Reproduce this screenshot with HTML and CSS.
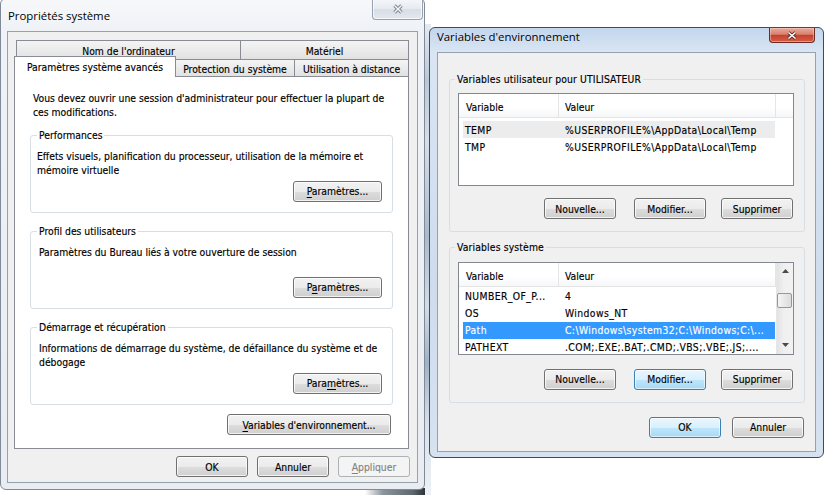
FILE: index.html
```html
<!DOCTYPE html>
<html lang="fr">
<head>
<meta charset="utf-8">
<title>Propriétés système</title>
<link rel="stylesheet" href="styles.css">
</head>
<body>
<div class="desktop">
  <div class="backdrop"></div>
  <div class="backdrop-shadow"></div>

  <section class="win win-sys">
    <header class="titlebar">
      <span class="title">Propriétés système</span>
      <span class="close close-inactive">
        <svg width="12" height="10" viewBox="0 0 12 10"><path d="M2.5 1.5 L9.5 8.5 M9.5 1.5 L2.5 8.5" stroke="#7d8797" stroke-width="3.4" fill="none"/><path d="M2.5 1.5 L9.5 8.5 M9.5 1.5 L2.5 8.5" stroke="#f7f8fa" stroke-width="1.4" fill="none"/></svg>
      </span>
    </header>
    <div class="client">
      <div class="tabctl">
        <div class="tabrow tabrow-back">
          <div class="tab tab-nom">Nom de l'ordinateur</div>
          <div class="tab tab-mat">Matériel</div>
        </div>
        <div class="tabrow tabrow-front">
          <div class="tab tab-sel">Paramètres système avancés</div>
          <div class="tab tab-prot">Protection du système</div>
          <div class="tab tab-util">Utilisation à distance</div>
        </div>
        <div class="panel">
          <p class="intro">Vous devez ouvrir une session d'administrateur pour effectuer la plupart de<br>ces modifications.</p>

          <fieldset class="group group-perf">
            <legend>Performances</legend>
            <div class="group-body">
              <p>Effets visuels, planification du processeur, utilisation de la mémoire et<br>mémoire virtuelle</p>
              <button class="btn btn-param"><u>P</u>aramètres...</button>
            </div>
          </fieldset>

          <fieldset class="group">
            <legend>Profil des utilisateurs</legend>
            <div class="group-body">
              <p>Paramètres du Bureau liés à votre ouverture de session</p>
              <button class="btn btn-param">P<u>a</u>ramètres...</button>
            </div>
          </fieldset>

          <fieldset class="group">
            <legend>Démarrage et récupération</legend>
            <div class="group-body">
              <p>Informations de démarrage du système, de défaillance du système et de<br>débogage</p>
              <button class="btn btn-param">Para<u>m</u>ètres...</button>
            </div>
          </fieldset>

          <button class="btn btn-env"><u>V</u>ariables d'environnement...</button>
        </div>
      </div>
      <div class="dlg-buttons">
        <button class="btn">OK</button>
        <button class="btn">Annuler</button>
        <button class="btn btn-disabled"><u>A</u>ppliquer</button>
      </div>
    </div>
  </section>

  <section class="win win-env">
    <header class="titlebar">
      <span class="title">Variables d'environnement</span>
      <span class="close close-active">
        <svg width="12" height="9" viewBox="0 0 12 9"><path d="M2.5 1.5 L9.5 7.5 M9.5 1.5 L2.5 7.5" stroke="#5b2a22" stroke-width="3.2" fill="none"/><path d="M2.5 1.5 L9.5 7.5 M9.5 1.5 L2.5 7.5" stroke="#ffffff" stroke-width="1.6" fill="none"/></svg>
      </span>
    </header>
    <div class="client env-client">
      <fieldset class="vgroup">
        <legend>Variables utilisateur pour UTILISATEUR</legend>
        <div class="vgroup-body">
          <div class="listview">
            <div class="lv-main">
              <div class="lv-head">
                <div class="hc">Variable</div>
                <div class="hc">Valeur</div>
                <div class="hc hc-fill"></div>
              </div>
              <div class="lv-body lv-body-user">
                <div class="lv-row sel-inactive"><span>TEMP</span><span>%USERPROFILE%\AppData\Local\Temp</span></div>
                <div class="lv-row"><span>TMP</span><span>%USERPROFILE%\AppData\Local\Temp</span></div>
              </div>
            </div>
          </div>
          <div class="vbtns vbtns-user">
            <button class="btn btn-new">Nouvelle...</button>
            <button class="btn btn-mod">Modifier...</button>
            <button class="btn btn-del">Supprimer</button>
          </div>
        </div>
      </fieldset>

      <fieldset class="vgroup vgroup-sys">
        <legend>Variables système</legend>
        <div class="vgroup-body">
          <div class="listview">
            <div class="lv-main">
              <div class="lv-head">
                <div class="hc">Variable</div>
                <div class="hc">Valeur</div>
              </div>
              <div class="lv-body lv-body-sys">
                <div class="lv-row"><span>NUMBER_OF_P...</span><span>4</span></div>
                <div class="lv-row"><span>OS</span><span>Windows_NT</span></div>
                <div class="lv-row sel"><span>Path</span><span>C:\Windows\system32;C:\Windows;C:\...</span></div>
                <div class="lv-row"><span>PATHEXT</span><span>.COM;.EXE;.BAT;.CMD;.VBS;.VBE;.JS;....</span></div>
              </div>
            </div>
            <div class="scrollbar">
              <div class="sb-arrow"><svg width="7" height="4" viewBox="0 0 7 4"><path d="M0 4 L3.5 0 L7 4 Z" fill="#4a4a4a"/></svg></div>
              <div class="sb-track"><div class="sb-thumb"></div></div>
              <div class="sb-arrow"><svg width="7" height="4" viewBox="0 0 7 4"><path d="M0 0 L7 0 L3.5 4 Z" fill="#4a4a4a"/></svg></div>
            </div>
          </div>
          <div class="vbtns vbtns-sys">
            <button class="btn btn-new">Nouvelle...</button>
            <button class="btn btn-mod btn-blue">Modifier...</button>
            <button class="btn btn-del">Supprimer</button>
          </div>
        </div>
      </fieldset>

      <div class="env-buttons">
        <button class="btn btn-blue">OK</button>
        <button class="btn">Annuler</button>
      </div>
    </div>
  </section>
</div>
</body>
</html>
```

FILE: styles.css
```css
* { box-sizing: border-box; }

html, body {
  margin: 0;
  padding: 0;
}

body {
  width: 824px;
  height: 495px;
  overflow: hidden;
  background: #ffffff;
  font-family: "DejaVu Sans Condensed", "DejaVu Sans", sans-serif;
  font-stretch: semi-condensed;
  font-size: 10.3px;
  line-height: 14px;
  color: #000;
  -webkit-text-stroke: 0.15px currentColor;
}

.desktop {
  position: relative;
  width: 824px;
  height: 495px;
  background: #ffffff;
}

.backdrop {
  position: absolute;
  left: 423px;
  top: 24px;
  width: 8px;
  height: 471px;
  background: linear-gradient(180deg, #e4eaf1 0%, #b9c8d8 12%, #d6dfe9 25%, #a9bacc 45%, #d3dde8 60%, #9fb2c6 72%, #d8e1ea 85%, #eef2f6 100%);
}

.backdrop-shadow {
  position: absolute;
  left: 365px;
  top: 488px;
  width: 60px;
  height: 7px;
  background: linear-gradient(90deg, rgba(120,130,140,0) 0%, #8c949c 30%, #5e666e 80%, #2f3338 100%);
}

/* ---------- windows ---------- */
.win {
  position: absolute;
  display: flex;
  flex-direction: column;
  border: 1px solid #5d6878;
  border-radius: 6px;
}

.win-sys {
  left: 0;
  top: -2px;
  width: 425px;
  height: 492px;
  padding: 0 6px 6px 6px;
  border-color: #7f8997;
  background: linear-gradient(180deg, #f7f8fa 0, #eff2f6 32px, #e9edf2 100%);
}

.win-env {
  left: 429px;
  top: 27px;
  width: 395px;
  height: 431px;
  padding: 0 7px 5px 7px;
  border-color: #3f4b5b;
  background: linear-gradient(180deg, #c3d6ed 0, #d9e5f3 24px, #cfdcec 60%, #d6e2f0 100%);
}

.titlebar {
  position: relative;
  flex: none;
}

.win-sys .titlebar {
  height: 32px;
  padding: 9px 0 0 1px;
}

.win-env .titlebar {
  height: 24px;
  padding: 1px 0 0 0;
}

.title {
  display: block;
  font-family: "Open Sans", "Noto Sans", sans-serif;
  font-stretch: normal;
  font-size: 11.4px;
  line-height: 15px;
  color: #000;
  -webkit-text-stroke: 0;
}

.close {
  position: absolute;
  display: flex;
  align-items: center;
  justify-content: center;
  border-radius: 0 0 4px 4px;
}

.close-inactive {
  left: 365px;
  top: 0;
  width: 51px;
  height: 21px;
  border: 1px solid #98a2b0;
  border-top: none;
  background: linear-gradient(180deg, #f5f7fa 0%, #e6eaf0 50%, #d8dee6 52%, #e4e8ee 100%);
  box-shadow: inset 0 0 0 1px rgba(255,255,255,0.7);
}

.close-active {
  left: 332px;
  top: 0;
  width: 46px;
  height: 15px;
  border: 1px solid #6b2a22;
  border-top: none;
  background: linear-gradient(180deg, #e9aa9c 0%, #d9806d 45%, #c4412f 52%, #d55e45 100%);
  box-shadow: inset 0 0 0 1px rgba(255,220,210,0.45);
}

.client {
  flex: 1;
  display: flex;
  flex-direction: column;
  border: 1px solid #96a1af;
  background: #f0f0f0;
}

/* ---------- tab control ---------- */
.tabctl {
  margin: 8px 8px 0 6px;
}

.tabrow {
  display: flex;
  align-items: flex-end;
}

.tabrow-back {
  height: 19px;
  padding-left: 2px;
}

.tabrow-front {
  height: 17px;
}

.tab {
  display: flex;
  align-items: center;
  justify-content: center;
  white-space: nowrap;
  border: 1px solid #898c95;
  border-bottom: none;
  background: linear-gradient(180deg, #f4f4f4 0%, #ebebeb 50%, #e1e1e1 100%);
}

.tab + .tab { margin-left: -1px; }

.tabrow-back .tab { height: 19px; padding-top: 1px; }
.tabrow-front .tab { height: 17px; padding-top: 1px; }

.tab-nom { width: 225px; }
.tab-mat { width: 169px; }
.tab-prot { width: 120px; }
.tab-util { width: 115px; }

.tabrow-front .tab-sel {
  position: relative;
  z-index: 1;
  width: 162px;
  height: 21px;
  padding-top: 0;
  margin-bottom: -1px;
  background: #ffffff;
}

.panel {
  display: flex;
  flex-direction: column;
  height: 373px;
  padding: 13.5px 15px 0 15px;
  border: 1px solid #898c95;
  background: #ffffff;
}

.intro {
  margin: 0 0 0 3px;
  white-space: nowrap;
}

/* group boxes */
fieldset {
  margin: 0;
  min-width: 0;
}

legend {
  line-height: 15px;
  white-space: nowrap;
}

.group {
  margin-top: 11px;
  padding: 0 10px 10px 6px;
  border: 1px solid #d5dfe5;
  border-radius: 3px;
}

.group-perf { margin-top: 9px; }

.group legend {
  margin-left: 0;
  padding: 0 2px;
}

.group-body {
  display: flex;
  flex-direction: column;
  height: 59px;
  padding: 6px 0 0 2px;
}

.group-perf .group-body { padding-left: 0; }

.group-body p {
  margin: 0;
  white-space: nowrap;
}

.group-body .btn {
  margin-top: auto;
  align-self: flex-end;
}

/* ---------- buttons ---------- */
.btn {
  width: 72px;
  height: 21px;
  padding: 0;
  font: inherit;
  line-height: 14px;
  color: #000;
  border: 1px solid #707070;
  border-radius: 3px;
  background: linear-gradient(180deg, #f2f2f2 0%, #ebebeb 50%, #dddddd 51%, #cfcfcf 100%);
  box-shadow: inset 0 0 0 1px rgba(255,255,255,0.75);
  white-space: nowrap;
}

.btn u { text-decoration: underline; text-underline-offset: 2px; }

.btn-param { width: 89px; }

.btn-env {
  width: 164px;
  align-self: flex-end;
  margin: 9.5px 2px 0 0;
}

.btn-blue {
  border-color: #3c7fb1;
  background: linear-gradient(180deg, #eaf6fd 0%, #d9f0fc 50%, #bee6fd 51%, #a7d9f5 100%);
  box-shadow: inset 0 0 0 1px rgba(255,255,255,0.6);
}

.btn-disabled {
  color: #838383;
  border-color: #adb2b5;
  background: #f4f4f4;
  box-shadow: none;
}

.dlg-buttons {
  display: flex;
  justify-content: flex-end;
  gap: 9px;
  margin: 7px 7px 0 0;
}

/* ---------- environment window ---------- */
.env-client {
  padding: 18.5px 10px 12px 11px;
}

.vgroup {
  padding: 0 10px 12px 8px;
  border: 1px solid #d5dfe5;
  border-radius: 3px;
}

.vgroup legend {
  margin-left: -3px;
  padding: 0 2px;
  letter-spacing: 0.15px;
}

.vgroup-sys { margin-top: 8px; }

.vgroup-body {
  display: flex;
  flex-direction: column;
  padding-top: 6.5px;
}

.listview {
  display: flex;
  height: 93px;
  border: 1px solid #828790;
  background: #ffffff;
  overflow: hidden;
}

.lv-main {
  flex: 1;
  min-width: 0;
}

.lv-head {
  display: grid;
  grid-template-columns: 100px 217px 1fr;
  height: 24px;
  border-bottom: 1px solid #e5e5e5;
  background: linear-gradient(180deg, #ffffff 0%, #ffffff 55%, #f6f7f9 100%);
}

.vgroup-sys .lv-head { grid-template-columns: 100px 217px; }

.hc {
  display: flex;
  align-items: center;
  padding: 3px 0 0 7px;
  border-right: 1px solid #e5e5e5;
}

.hc + .hc { padding-left: 6px; }
.hc-fill { border-right: none; }

.lv-body-user { padding-top: 3px; }
.lv-body-sys { padding-top: 1px; }

.lv-row {
  display: grid;
  grid-template-columns: 95px 217px;
  width: 312px;
  height: 17px;
  margin-left: 4px;
  align-items: center;
  white-space: nowrap;
  letter-spacing: 0.4px;
}

.lv-row span:first-child { padding-left: 2px; }
.lv-row span + span { padding-left: 7px; overflow: hidden; }

.lv-row.sel-inactive { background: #ececec; }
.lv-row.sel { background: #3399ff; color: #ffffff; }

.scrollbar {
  display: flex;
  flex-direction: column;
  width: 17px;
  flex: none;
  border-left: 1px solid #e6e6e6;
  background: linear-gradient(90deg, #e3e3e3 0%, #efefef 40%, #f2f2f2 100%);
}

.sb-arrow {
  display: flex;
  align-items: center;
  justify-content: center;
  height: 17px;
  flex: none;
}

.sb-track {
  flex: 1;
  padding-top: 13px;
}

.sb-thumb {
  height: 15px;
  margin: 0 1px 0 0;
  border: 1px solid #979797;
  border-radius: 2px;
  background: linear-gradient(90deg, #f5f5f5 0%, #e8e8e8 50%, #dcdcdc 100%);
}

.vbtns {
  display: flex;
  justify-content: flex-end;
  padding-right: 1px;
}

.vbtns-user { margin-top: 12px; }
.vbtns-sys { margin-top: 14px; }

.btn-mod { margin-left: 18px; }
.btn-del { margin-left: 15px; }

.env-buttons {
  display: flex;
  justify-content: flex-end;
  gap: 11px;
  margin: 14px 1px 0 0;
}
```
